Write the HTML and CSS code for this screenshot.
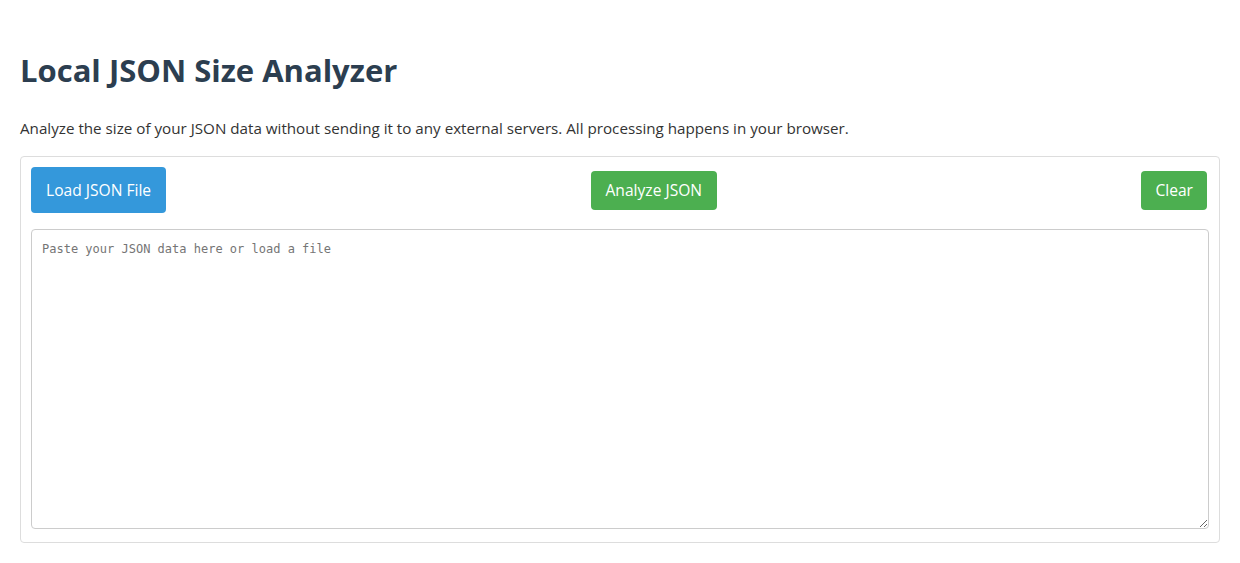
FILE: index.html
```html
<!DOCTYPE html>
<html lang="en">
<head>
<meta charset="utf-8">
<title>Local JSON Size Analyzer</title>
<link rel="stylesheet" href="styles.css">
</head>
<body>
<div class="page">
  <h1 class="title">Local JSON Size Analyzer</h1>
  <p class="intro">Analyze the size of your JSON data without sending it to any external servers. All processing happens in your browser.</p>
  <div class="panel">
    <div class="toolbar">
      <button class="btn btn-load">Load JSON File</button>
      <button class="btn btn-green btn-analyze">Analyze JSON</button>
      <button class="btn btn-green btn-clear">Clear</button>
    </div>
    <textarea class="json-input" placeholder="Paste your JSON data here or load a file"></textarea>
  </div>
</div>
</body>
</html>
```

FILE: styles.css
```css
html, body {
  margin: 0;
  padding: 0;
  background: #fff;
}
body {
  font-family: "Open Sans", "Noto Sans", sans-serif;
  color: #333;
}
.page {
  padding: 0 20px;
}
.title {
  margin: 0;
  padding-top: 50px;
  font-size: 31px;
  line-height: 40px;
  font-weight: 700;
  color: #2c3e50;
}
.intro {
  margin: 28px 0 18px;
  font-size: 15.2px;
  line-height: 20px;
}
.panel {
  border: 1px solid #ddd;
  border-radius: 4px;
  padding: 10px;
}
.toolbar {
  display: flex;
  justify-content: space-between;
  align-items: center;
  margin-bottom: 16px;
}
.btn {
  border: none;
  border-radius: 4px;
  color: #fff;
  font-family: "Open Sans", "Noto Sans", sans-serif;
  cursor: pointer;
}
.btn-load {
  background: #3498db;
  height: 46px;
  padding: 0 15px;
  font-size: 15.6px;
  line-height: 22px;
}
.btn-green {
  background: #4caf50;
  height: 39px;
  padding: 0 15px;
  font-size: 15.6px;
  line-height: 22px;
}
.btn-clear {
  padding: 0 14px;
  margin-right: 2px;
}
.json-input {
  display: block;
  box-sizing: border-box;
  width: 100%;
  height: 300px;
  padding: 12px 10px 10px;
  border: 1px solid #ccc;
  border-radius: 4px;
  font-family: "DejaVu Sans Mono", "Liberation Mono", monospace;
  font-size: 12px;
  resize: vertical;
  margin-bottom: 3px;
}
.json-input::placeholder {
  color: #757575;
}
```
